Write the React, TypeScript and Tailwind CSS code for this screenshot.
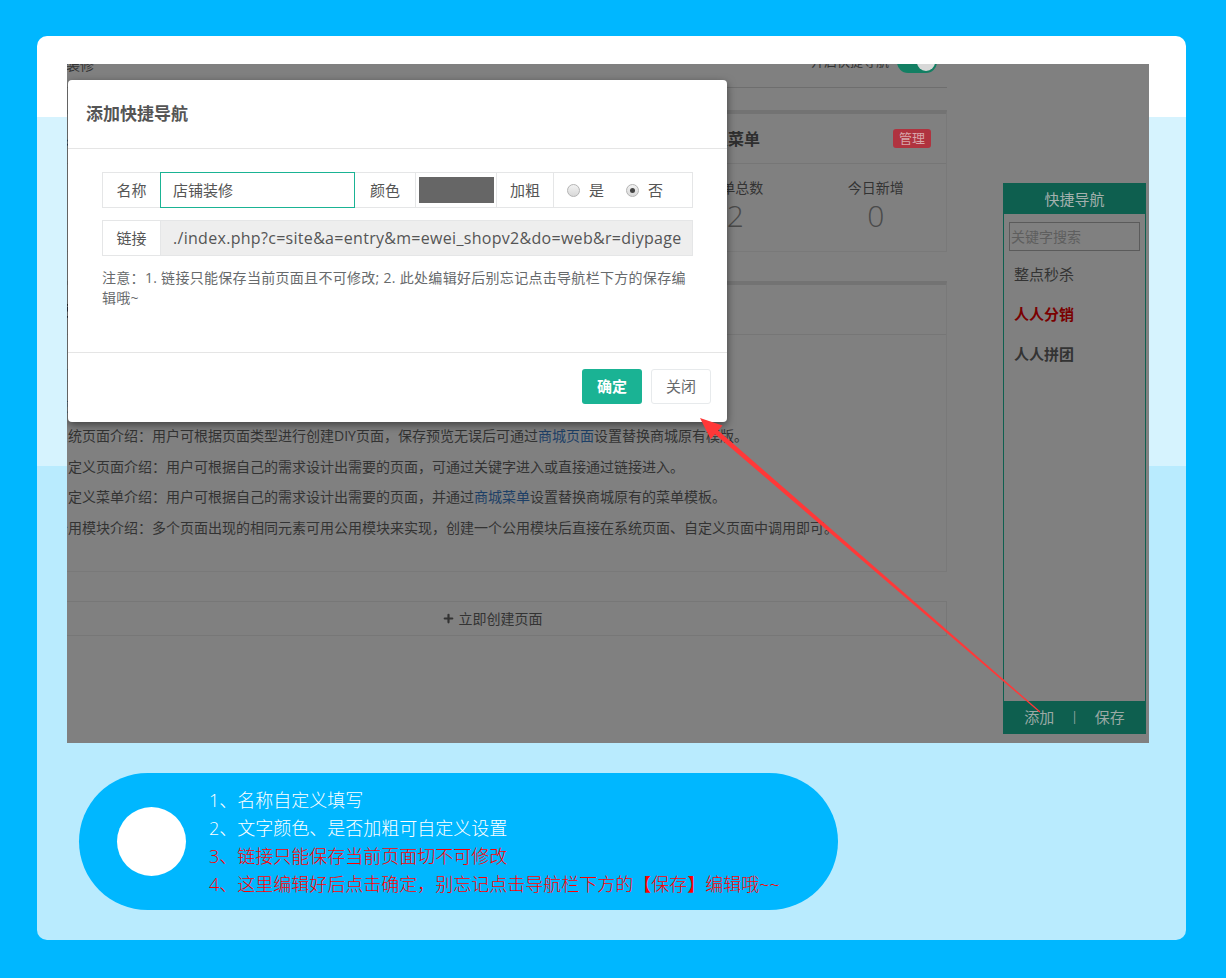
import { Plus } from "lucide-react";

const font = "font-['Open_Sans','Noto_Sans_CJK_SC',sans-serif]";

const Stat = ({ label, value }: { label: string; value: string }) => (
  <div className="flex flex-col items-center">
    <span className="mt-[14px] text-[14px] leading-[20px] text-[#333]">{label}</span>
    <span className="mt-[3px] text-[30px] leading-[30px] font-light text-[#4a4a4a]">{value}</span>
  </div>
);

const Panel = ({ title, badge, stats }: { title: string; badge?: boolean; stats: [string, string][] }) => (
  <div className="border border-[#797979] border-t-[4px] border-t-[#737373]">
    <div className="h-[50px] flex items-center justify-between px-[15px] border-b border-[#767676]">
      <span className="text-[16px] font-bold text-[#2e2e2e]">{title}</span>
      {badge && (
        <span className="h-[19px] px-[6px] rounded-[3px] bg-[#b0333f] text-[13px] leading-[19px] text-[#d8a6aa]">管理</span>
      )}
    </div>
    <div className="h-[87px] grid grid-cols-2">
      {stats.map(([l, v]) => (
        <Stat key={l} label={l} value={v} />
      ))}
    </div>
  </div>
);

// background page, already shown dimmed by the modal backdrop
const Page = () => (
  <div className="flex -ml-[30px] -mt-[20px]">
    <div className="w-[910px] shrink-0">
      <div className="h-[44px] border-b border-[#6e6e6e] flex items-end justify-between pb-[14px] pl-[1px] pr-[10px]">
        <span className="text-[14px] leading-[16px] text-[#333]">店铺装修</span>
        <div className="flex items-center gap-[8px]">
          <span className="text-[13px] text-[#333]">开启快捷导航</span>
          <span className="relative w-[40px] h-[22px] rounded-full bg-[#137f63]">
            <span className="absolute right-[2px] top-[2px] w-[18px] h-[18px] rounded-full bg-[#d8d8d8]" />
          </span>
        </div>
      </div>

      <div className="mt-[22px] grid grid-cols-[1fr_1fr_283px] gap-[20px]">
        <Panel title="系统页面" stats={[["页面总数", "6"], ["今日新增", "0"]]} />
        <Panel title="自定义页面" stats={[["页面总数", "3"], ["今日新增", "0"]]} />
        <Panel title="自定义菜单" badge stats={[["菜单总数", "2"], ["今日新增", "0"]]} />
      </div>

      <div className="mt-[29px] border border-[#797979] border-t-[4px] border-t-[#737373]">
        <div className="h-[50px] flex items-center px-[15px] border-b border-[#767676] text-[16px] font-bold text-[#2e2e2e]">
          使用帮助
        </div>
        <div className="pt-[25px] pb-[28px] pl-[16px] text-[14px] leading-[30.5px] text-[#333] whitespace-nowrap">
          <p>页面管理：可在此处管理商城的所有DIY页面，包括系统页面、自定义页面、自定义菜单及公用模块。</p>
          <p>使用说明：请先选择需要创建的页面类型，再进入编辑器进行页面装修。</p>
          <p>
            系统页面介绍：用户可根据页面类型进行创建DIY页面，保存预览无误后可通过
            <span className="text-[#1d3f66]">商城页面</span>设置替换商城原有模版。
          </p>
          <p>自定义页面介绍：用户可根据自己的需求设计出需要的页面，可通过关键字进入或直接通过链接进入。</p>
          <p>
            自定义菜单介绍：用户可根据自己的需求设计出需要的页面，并通过
            <span className="text-[#1d3f66]">商城菜单</span>设置替换商城原有的菜单模板。
          </p>
          <p>公用模块介绍：多个页面出现的相同元素可用公用模块来实现，创建一个公用模块后直接在系统页面、自定义页面中调用即可。</p>
        </div>
      </div>

      <div className="mt-[29px] h-[35px] border border-[#777] flex items-center justify-center gap-[4px] text-[14px] text-[#333]">
        <Plus size={13} strokeWidth={4} />
        <span>立即创建页面</span>
      </div>
    </div>

    {/* quick nav sidebar */}
    <div className="ml-[56px] mt-[139px] w-[143px] h-[551px] shrink-0 border border-[#0e5f4f] flex flex-col">
      <div className="h-[30px] bg-[#0e5f4f] flex items-center justify-center text-[15px] text-[#a3b0ad]">快捷导航</div>
      <div className="flex-1 px-[5px] pt-[8px]">
        <div className="h-[29px] border border-[#5b5b5b] flex items-center pl-[1px] text-[14px] text-[#5e5e5e]">关键字搜索</div>
        <div className="mt-[3px] px-[5px] text-[15px]">
          <div className="h-[40px] leading-[40px] text-[#333]">整点秒杀</div>
          <div className="h-[40px] leading-[40px] font-bold text-[#7a0000]">人人分销</div>
          <div className="h-[40px] leading-[40px] font-bold text-[#333]">人人拼团</div>
        </div>
      </div>
      <div className="h-[32px] bg-[#0e5f4f] flex items-center justify-center gap-[17px] text-[15px] text-[#9aa9a5]">
        <span>添加</span>
        <span className="text-[12px]">|</span>
        <span>保存</span>
      </div>
    </div>
  </div>
);

const Radio = ({ checked }: { checked?: boolean }) => (
  <span className="w-[13px] h-[13px] rounded-full border border-[#b4b4b4] bg-[linear-gradient(#f2f2f2,#d8d8d8)] flex items-center justify-center">
    {checked && <span className="w-[5px] h-[5px] rounded-full bg-[#444]" />}
  </span>
);

const Dialog = () => (
  <div className="absolute left-[1px] top-[16px] w-[659px] h-[342px] bg-white rounded-[4px] shadow-[0_3px_9px_rgba(0,0,0,0.5)] flex flex-col">
    <div className="h-[69px] border-b border-[#e5e5e5] flex items-center pl-[18px] text-[17px] font-bold text-[#555]">
      添加快捷导航
    </div>
    <div className="h-[203px] px-[34px] pt-[23px] text-[15px] text-[#555]">
      <div className="flex h-[36px] border border-[#e5e6e7]">
        <div className="w-[57px] flex items-center justify-center">名称</div>
        <div className="w-[195px] h-[36px] -my-px border border-[#1ab394] flex items-center pl-[12px] relative">店铺装修</div>
        <div className="w-[60px] flex items-center justify-center">颜色</div>
        <div className="w-[81px] border-l border-[#e5e6e7] flex items-center justify-center">
          <span className="w-[75px] h-[26px] bg-[#666]" />
        </div>
        <div className="w-[57px] border-l border-[#e5e6e7] flex items-center justify-center">加粗</div>
        <div className="flex-1 border-l border-[#e5e6e7] flex items-center pl-[13px]">
          <Radio />
          <span className="ml-[9px]">是</span>
          <span className="ml-[22px]"><Radio checked /></span>
          <span className="ml-[9px]">否</span>
        </div>
      </div>
      <div className="mt-[12px] flex h-[36px] border border-[#e5e6e7]">
        <div className="w-[57px] flex items-center justify-center">链接</div>
        <div className="flex-1 border-l border-[#e5e6e7] bg-[#eee] flex items-center pl-[12px] whitespace-nowrap text-[16px] tracking-[0.3px]">
          ./index.php?c=site&amp;a=entry&amp;m=ewei_shopv2&amp;do=web&amp;r=diypage
        </div>
      </div>
      <p className="mt-[12px] text-[14px] leading-[20px] tracking-[0.3px] text-[#676a6c]">
        注意：1. 链接只能保存当前页面且不可修改; 2. 此处编辑好后别忘记点击导航栏下方的保存编
        <br />
        辑哦~
      </p>
    </div>
    <div className="flex-1 border-t border-[#e5e5e5] flex justify-end items-start pt-[16px] pr-[16px] gap-[9px]">
      <button className="w-[60px] h-[35px] rounded-[3px] bg-[#1ab394] text-white text-[15px] font-bold">确定</button>
      <button className="w-[60px] h-[35px] rounded-[3px] border border-[#e7eaec] bg-white text-[#676a6c] text-[15px]">关闭</button>
    </div>
  </div>
);

const Arrow = () => (
  <svg className="absolute left-0 top-0 pointer-events-none" width="1226" height="978" viewBox="0 0 1226 978">
    <polygon
      fill="#ff3838"
      points="1040.4,711.6 718.2,430.5 722.5,425.6 700,418 710.7,439.2 715,434.3 1039.6,712.4"
    />
  </svg>
);

export default function App() {
  return (
    <div className={`relative w-[1226px] h-[978px] bg-[#00b7ff] pt-[36px] pl-[37px] ${font}`}>
      <div className="w-[1149px] h-[904px] rounded-[10px] overflow-hidden bg-[linear-gradient(to_bottom,#ffffff_0px,#ffffff_81px,#d6f3fe_81px,#d6f3fe_430px,#b9ebfe_430px)] pt-[28px] pl-[30px]">
        <div className="relative w-[1082px] h-[679px] overflow-hidden bg-[#808080]">
          <Page />
          <Dialog />
        </div>

        <div className="mt-[30px] ml-[12px] w-[759px] h-[137px] rounded-full bg-[#00b7ff] flex items-center pl-[38px]">
          <span className="w-[69px] h-[69px] rounded-full bg-white shrink-0" />
          <div className="ml-[23px] text-[18px] leading-[28px] font-light">
            <p className="text-white">1、名称自定义填写</p>
            <p className="text-white">2、文字颜色、是否加粗可自定义设置</p>
            <p className="text-[#ff0000]">3、链接只能保存当前页面切不可修改</p>
            <p className="text-[#ff0000]">4、这里编辑好后点击确定，别忘记点击导航栏下方的【保存】编辑哦~~</p>
          </div>
        </div>
      </div>
      <Arrow />
    </div>
  );
}
